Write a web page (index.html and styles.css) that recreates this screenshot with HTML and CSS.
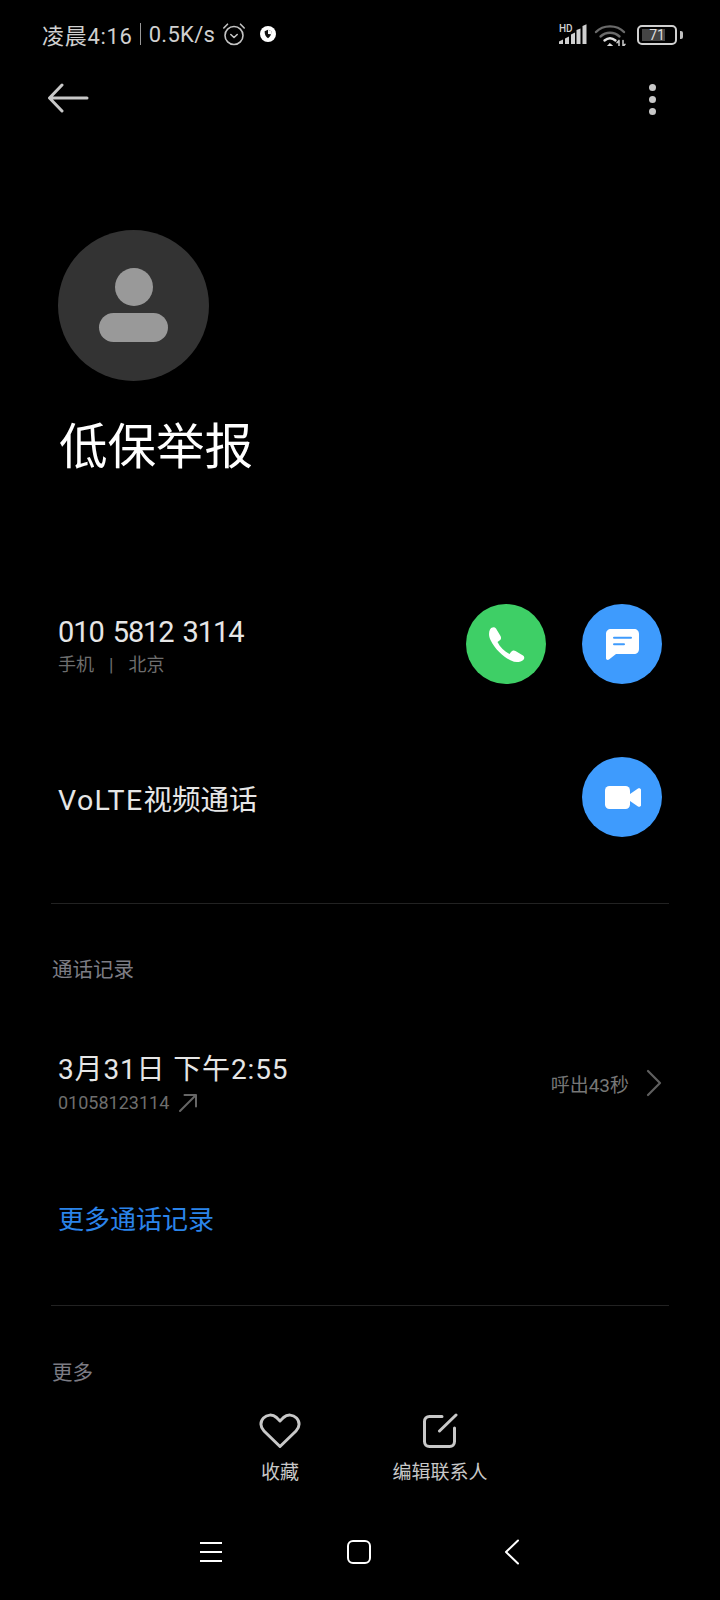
FILE: index.html
```html
<!DOCTYPE html>
<html lang="zh-CN">
<head>
    <meta charset="UTF-8">
    <meta name="viewport" content="width=device-width, initial-scale=1.0">
    <title>低保举报</title>
    <link rel="stylesheet" href="styles.css">
</head>
<body>
    <div class="page">
        <div class="status-bar">
            <div class="status-left">
                <span class="clock">凌晨4:16</span>
                <span class="status-sep"></span>
                <span class="speed">0.5K/s</span>
                <svg class="alarm" width="24" height="24" viewBox="0 0 24 24" fill="none" stroke="#c4c4c4" stroke-width="1.6" stroke-linecap="round" stroke-linejoin="round">
                    <circle cx="12" cy="13.5" r="9"/>
                    <path d="M1.8 6 5.5 2.2M22.2 6 18.5 2.2M8.8 12.5 12 15.5 15.2 12.5"/>
                </svg>
                <svg class="vpn" width="16" height="16" viewBox="0 0 16 16">
                    <circle cx="8" cy="8" r="8" fill="#fff"/>
                    <path d="M4.6 5.2 8 3.8l3.4 1.4c0 3.4-1.2 5.6-3.4 7-2.2-1.4-3.4-3.6-3.4-7z" fill="#111"/>
                    <path d="M8 3.8l3.4 1.4c0 1.200-.15 2.200-.45 3.100L8 8z" fill="#fff"/>
                </svg>
            </div>
            <div class="status-right">
                <svg width="28" height="20" viewBox="0 0 28 20" fill="#d0d0d0">
                    <text x="0" y="7.500" class="hd-label">HD</text>
                    <path d="M0 20v-2.500L4 15.500V20zM6 20v-5.500l4-2V20zM12 20v-9.500l4-2V20zM17.500 20V6l4-1.500V20zM23.500 20V2l4-1.800V20z"/>
                </svg>
                <svg class="wifi" width="34" height="24" viewBox="0 0 34 24" fill="none" stroke-linecap="round">
                    <path d="M3 10C10 2.500 24 2.500 31 10" stroke="#6a6a6a" stroke-width="2.400"/>
                    <path d="M7.500 14.500C13 9.500 21 9.500 26.500 14.500" stroke="#6a6a6a" stroke-width="2.400"/>
                    <path d="M11.500 18.500C15 15.500 19 15.500 22.500 18.500" stroke="#e0e0e0" stroke-width="2.400"/>
                    <path d="M14.500 24 17 21.500 19.500 24z" fill="#e0e0e0" stroke="#e0e0e0" stroke-width="1"/>
                    <path d="M26 18.500v6M26 18.500l-2 2.200M30 18.500v6M30 24.500l2-2.200" stroke="#cfcfcf" stroke-width="1.500"/>
                </svg>
                <div class="battery">
                    <div class="battery-body">
                        <div class="battery-fill"></div>
                        <span class="battery-num">71</span>
                    </div>
                    <div class="battery-cap"></div>
                </div>
            </div>
        </div>

        <div class="top-bar">
            <svg width="42" height="30" viewBox="0 0 42 30" fill="none" stroke="#c8c8c8" stroke-width="3" stroke-linecap="round" stroke-linejoin="round">
                <path d="M40 15H3M15 2 2.500 15 15 28"/>
            </svg>
            <div class="more-dots">
                <span></span>
                <span></span>
                <span></span>
            </div>
        </div>

        <div class="profile">
            <div class="avatar">
                <div class="avatar-head"></div>
                <div class="avatar-body"></div>
            </div>
            <h1 class="contact-name">低保举报</h1>
        </div>

        <div class="number-row">
            <div>
                <div class="phone-number">010 5812 3114</div>
                <div class="phone-meta">手机<span class="meta-sep">|</span>北京</div>
            </div>
            <div class="row-buttons">
                <div class="round-btn green">
                    <svg width="37" height="36" viewBox="0 0 37 36" fill="#fff">
                        <path d="M2 3.500C3.500 1 6.500 .5 8 2.500L12.500 10C13.500 12 13 13.500 11.500 14.500L9.500 16C12 21 16.500 25.500 21.500 28L23 26C24 24.500 26 24 27.500 25L35 29.500C37 31 36.500 33.500 34.500 34.500C31 36.500 27 36.500 23 34.500C15 31 7 23 2.500 14C.8 10.500 .5 6.500 2 3.500Z"/>
                    </svg>
                </div>
                <div class="round-btn blue">
                    <svg width="33" height="31" viewBox="0 0 33 31" fill="none">
                        <path d="M5 0h23c3 0 5 2 5 5v15c0 3-2 5-5 5H10L3 30.500c-1.200 1-3 .3-3-1.200V5c0-3 2-5 5-5z" fill="#fff"/>
                        <path d="M8 8.700h17M8 15.300h10" stroke="#3e9bfd" stroke-width="2" stroke-linecap="round"/>
                    </svg>
                </div>
            </div>
        </div>

        <div class="video-row">
            <div class="video-label"><span class="volte">VoLTE</span>视频通话</div>
            <div class="round-btn blue">
                <svg class="video-icon" width="36" height="23" viewBox="0 0 36 23" fill="#fff">
                    <rect x="0" y="0" width="25" height="23" rx="4.500"/>
                    <path d="M25 8 33 2.500c1.100-.8 3-.1 3 1.200v15.600c0 1.300-1.900 2-3 1.200L25 15z"/>
                </svg>
            </div>
        </div>

        <div class="divider"></div>

        <div class="section-title log-title">通话记录</div>

        <div class="log-row">
            <div>
                <div class="log-date">3月31日 下午2:55</div>
                <div class="log-number">
                    01058123114
                    <svg width="20" height="20" viewBox="0 0 20 20" fill="none" stroke="#666" stroke-width="2" stroke-linecap="round" stroke-linejoin="round">
                        <path d="M2 18 18 2M6.500 2H18v11.500"/>
                    </svg>
                </div>
            </div>
            <div class="log-right">
                <span>呼出43秒</span>
                <svg width="16" height="28" viewBox="0 0 16 28" fill="none" stroke="#5f5f5f" stroke-width="2.200" stroke-linecap="round" stroke-linejoin="round">
                    <path d="M2 2 14 14 2 26"/>
                </svg>
            </div>
        </div>

        <div class="more-log">更多通话记录</div>

        <div class="divider"></div>

        <div class="section-title more-title">更多</div>

        <div class="action-bar">
            <div class="action-item">
                <svg width="42" height="36" viewBox="0 0 42 36" fill="none" stroke="#c8c8c8" stroke-width="3" stroke-linejoin="round">
                    <path d="M21 33.500 5 18C1 14 1 8.500 4.500 5 8 1.500 13.500 1 17.500 4.500L21 8l3.500-3.500C28.500 1 34 1.500 37.500 5 41 8.500 41 14 37 18z"/>
                </svg>
                <span>收藏</span>
            </div>
            <div class="action-item">
                <svg width="36" height="36" viewBox="0 0 36 36" fill="none" stroke="#c8c8c8" stroke-width="3" stroke-linecap="round" stroke-linejoin="round">
                    <path d="M20 3.500H7.500c-3 0-5 2-5 5V28.500c0 3 2 5 5 5h20c3 0 5-2 5-5V15"/>
                    <path d="M17.500 18 34 2"/>
                </svg>
                <span>编辑联系人</span>
            </div>
        </div>

        <div class="nav-bar">
            <div class="nav-menu">
                <span></span>
                <span></span>
                <span></span>
            </div>
            <div class="nav-home"></div>
            <svg width="16" height="26" viewBox="0 0 16 26" fill="none" stroke="#fff" stroke-width="2" stroke-linecap="round" stroke-linejoin="round">
                <path d="M14 1.500 2 13l12 11.500"/>
            </svg>
        </div>
    </div>
</body>
</html>
```

FILE: styles.css
```css
body {
    margin: 0;
    background-color: #000;
    color: #e6e6e6;
    font-family: Roboto, "Noto Sans CJK SC", sans-serif;
}

.page {
    width: 720px;
    height: 1600px;
    overflow: hidden;
    display: flex;
    flex-direction: column;
}

/* status bar */
.status-bar {
    height: 68px;
    padding: 0 37px 0 42px;
    display: flex;
    align-items: center;
    justify-content: space-between;
    color: #d0d0d0;
    font-size: 22px;
}

.status-left,
.status-right {
    display: flex;
    align-items: center;
}

.clock {
    letter-spacing: 0.7px;
}

.speed {
    letter-spacing: 0.3px;
}

.status-sep {
    width: 1px;
    height: 22px;
    margin: 0 8px 0 7px;
    background-color: #999;
}

.alarm {
    margin-left: 7px;
}

.vpn {
    margin-left: 14px;
}

.status-right {
    gap: 8px;
}

.wifi {
    margin-left: -2px;
}

.hd-label {
    font-size: 10px;
    font-weight: 500;
}

.battery {
    display: flex;
    align-items: center;
    gap: 3px;
    margin: 2px 0 0 2px;
}

.battery-body {
    position: relative;
    width: 30px;
    height: 12px;
    border: 2px solid #d0d0d0;
    border-radius: 5px;
    padding: 2px 3px;
}

.battery-fill {
    width: 78%;
    height: 100%;
    background-color: #444;
}

.battery-num {
    position: absolute;
    left: 0;
    right: 0;
    top: 0;
    text-align: center;
    font-size: 14px;
    line-height: 16px;
    color: #ddd;
}

.battery-cap {
    width: 3px;
    height: 8px;
    border-radius: 0 2px 2px 0;
    background-color: #c0c0c0;
}

/* back and menu */
.top-bar {
    height: 60px;
    padding: 0 64px 0 47px;
    display: flex;
    align-items: center;
    justify-content: space-between;
}

.more-dots {
    display: flex;
    flex-direction: column;
    gap: 5px;
    margin-top: 2px;
}

.more-dots span {
    width: 7px;
    height: 7px;
    border-radius: 50%;
    background-color: #c8c8c8;
}

/* avatar and name */
.profile {
    padding: 102px 0 0 58px;
}

.avatar {
    width: 151px;
    height: 151px;
    border-radius: 50%;
    background-color: #333;
    display: flex;
    flex-direction: column;
    align-items: center;
    padding-top: 38px;
    box-sizing: border-box;
}

.avatar-head {
    width: 38px;
    height: 38px;
    border-radius: 50%;
    background-color: #999;
}

.avatar-body {
    width: 69px;
    height: 29px;
    margin-top: 7px;
    border-radius: 15px;
    background-color: #999;
}

.contact-name {
    margin: 32px 0 0 1px;
    font-size: 48.5px;
    font-weight: 400;
    line-height: 70px;
    color: #fff;
}

/* number rows */
.number-row,
.video-row,
.log-row {
    display: flex;
    align-items: center;
    justify-content: space-between;
    padding: 0 58px;
}

.number-row {
    margin-top: 121px;
}

.phone-number {
    font-size: 29px;
    line-height: 42px;
    letter-spacing: -1.1px;
    word-spacing: 3px;
    color: #e6e6e6;
}

.phone-meta {
    font-size: 18px;
    line-height: 24px;
    color: #6e6e6e;
}

.meta-sep {
    margin: 0 15px;
}

.row-buttons {
    display: flex;
    gap: 36px;
}

.round-btn {
    width: 80px;
    height: 80px;
    border-radius: 50%;
    display: flex;
    align-items: center;
    justify-content: center;
}

.green {
    background-color: #3ecf66;
}

.blue {
    background-color: #3e9bfd;
}

.video-icon {
    margin-left: 2px;
}

.video-row {
    margin-top: 73px;
}

.video-label {
    font-size: 28.5px;
    color: #e6e6e6;
}

.volte {
    letter-spacing: 1.4px;
}

.divider {
    height: 1px;
    margin: 0 51px;
    background-color: #222;
}

.video-row + .divider {
    margin-top: 66px;
}

.section-title {
    margin-left: 52px;
    font-size: 20.5px;
    line-height: 28px;
    color: #7c7c84;
}

.log-title {
    margin-top: 52px;
}

/* call log */
.log-row {
    margin-top: 66px;
}

.log-date {
    font-size: 28px;
    line-height: 40px;
    letter-spacing: 0.85px;
    color: #e6e6e6;
}

.log-number {
    display: flex;
    align-items: center;
    gap: 9px;
    font-size: 18px;
    line-height: 26px;
    color: #6e6e6e;
}

.log-right {
    display: flex;
    align-items: center;
    gap: 17px;
    font-size: 19px;
    color: #777;
}

.more-log {
    margin: 86px 0 0 58px;
    font-size: 26px;
    line-height: 36px;
    color: #2b84ea;
}

.more-log + .divider {
    margin-top: 67px;
}

.more-title {
    margin-top: 53px;
}

/* bottom actions */
.action-bar {
    margin-top: 26px;
    display: flex;
    justify-content: center;
}

.action-item {
    width: 160px;
    display: flex;
    flex-direction: column;
    align-items: center;
    gap: 11px;
    font-size: 19px;
    line-height: 26px;
    color: #c8c8c8;
}

.nav-bar {
    margin-top: 53px;
    padding: 0 200px;
    display: flex;
    align-items: center;
    justify-content: space-between;
}

.nav-menu {
    display: flex;
    flex-direction: column;
    gap: 7px;
}

.nav-menu span {
    width: 22px;
    height: 2px;
    background-color: #fff;
}

.nav-home {
    width: 20px;
    height: 20px;
    margin-right: 8px;
    border: 2px solid #fff;
    border-radius: 6px;
}
```
